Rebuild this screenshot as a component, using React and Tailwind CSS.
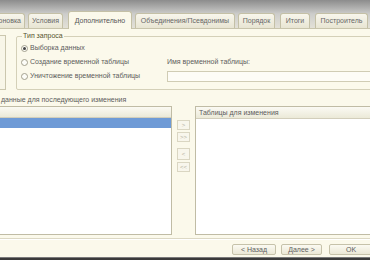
import React from 'react';

const tabs = [
  { label: 'Компоновка', cls: 'w-[31px] -ml-[6px]', align: 'justify-end pr-[3px]' },
  { label: 'Условия', cls: 'w-[35px] ml-[3px]' },
  { label: 'Дополнительно', cls: 'w-[64px] ml-[5px]', active: true },
  { label: 'Объединения/Псевдонимы', cls: 'w-[100px] ml-[3px]' },
  { label: 'Порядок', cls: 'w-[37px] ml-[3px]' },
  { label: 'Итоги', cls: 'w-[30px] ml-[5px]' },
  { label: 'Построитель', cls: 'w-[53px] ml-[5px]' },
];

function Tab({ label, cls, active, align }) {
  if (active) {
    return (
      <div className={`${cls} h-[18px] -mb-px shrink-0 flex items-center justify-center rounded-t-[3px] border border-b-0 border-[#c4c0a6] bg-[#fbf9eb] text-[#555] relative`}>
        {label}
      </div>
    );
  }
  return (
    <div className={`${cls} h-[15px] shrink-0 flex items-center ${align || 'justify-center'} overflow-hidden whitespace-nowrap rounded-t-[3px] border border-b-0 border-[#c4c0a6] bg-gradient-to-b from-[#f8f6ec] to-[#e8e5d3] text-[#666]`}>
      {label}
    </div>
  );
}

function Radio({ checked, label }) {
  return (
    <div className="h-[10px] flex items-center gap-[2px]">
      <div className="w-[7px] h-[7px] rounded-full border border-[#a3a08e] bg-[#fdfdf8] flex items-center justify-center">
        {checked && <div className="w-[3px] h-[3px] rounded-full bg-[#444]"></div>}
      </div>
      <span>{label}</span>
    </div>
  );
}

function ArrowButton({ children, className = '' }) {
  return (
    <div className={`w-[13px] h-[10px] flex items-center justify-center border border-[#dad6c2] bg-[#f8f6ec] text-[#b6b3a1] text-[6px] leading-none ${className}`}>
      {children}
    </div>
  );
}

function Button({ children, className = '' }) {
  return (
    <div className={`h-[11px] flex items-center justify-center rounded-[2px] border border-[#c6c2aa] bg-gradient-to-b from-[#fbfaf2] to-[#ebe8d6] text-[#606060] ${className}`}>
      {children}
    </div>
  );
}

export default function App() {
  return (
    <div
      className="w-[370px] h-[260px] overflow-hidden flex flex-col bg-[#fbf9eb] text-[7px] leading-[8px] text-[#5c5c5c]"
      style={{ fontFamily: '"Liberation Sans", Arial, sans-serif' }}
    >
      {/* Tab strip */}
      <div className="h-[29px] shrink-0 flex items-end border-b border-[#c8c4ac] bg-gradient-to-b from-[#8c8c8c] via-[#cdcdcb] to-[#e3e1d7]">
        {tabs.map((t) => (
          <Tab key={t.label} {...t} />
        ))}
      </div>

      {/* Content */}
      <div className="flex-1 flex flex-col">
        <div className="mt-[3px] h-[58px] flex">
          <div className="w-[6px] mt-[3px] h-[55px] border-t border-r border-b border-[#cbc7ae] bg-[#f8f6e8] shrink-0"></div>
          <fieldset className="ml-[10px] flex-1 -mr-[6px] h-[58px] border border-[#d4d0b8] rounded-[2px]">
            <legend className="ml-[5px] px-[1px] text-[#55532f] leading-[8px]">Тип запроса</legend>
            <div className="flex">
              <div className="w-[150px] shrink-0 pl-[4px] pt-[3px] flex flex-col gap-[4px]">
                <Radio checked label="Выборка данных" />
                <Radio label="Создание временной таблицы" />
                <Radio label="Уничтожение временной таблицы" />
              </div>
              <div className="flex-1 flex flex-col">
                <div className="mt-[18px] h-[8px]">Имя временной таблицы:</div>
                <div className="mt-[5px] h-[11px] border border-[#d0ccb4] bg-[#fdfcf6]"></div>
              </div>
            </div>
          </fieldset>
        </div>

        <div className="mt-[6px] h-[8px] pl-[1px] whitespace-nowrap">данные для последующего изменения</div>

        <div className="mt-[2px] h-[129px] flex">
          <div className="w-[173px] -ml-px shrink-0 flex flex-col border border-[#c0bca5] bg-white">
            <div className="h-[11px] border-b border-[#d2cebb] bg-gradient-to-b from-[#fbfaf3] to-[#ebe9d8]"></div>
            <div className="h-[10px] bg-[#6e9ad6]"></div>
          </div>
          <div className="w-[23px] shrink-0 flex flex-col items-center pt-[14px]">
            <ArrowButton>&gt;</ArrowButton>
            <ArrowButton className="mt-[2px]">&gt;&gt;</ArrowButton>
            <ArrowButton className="mt-[6px] h-[12px]">&lt;</ArrowButton>
            <ArrowButton className="mt-[2px]">&lt;&lt;</ArrowButton>
          </div>
          <div className="flex-1 -mr-px flex flex-col border border-[#c0bca5] bg-white">
            <div className="h-[12px] flex items-center pl-[3px] border-b border-[#d2cebb] bg-gradient-to-b from-[#fbfaf3] to-[#ebe9d8]">
              Таблицы для изменения
            </div>
          </div>
        </div>

        <div className="mt-[3px] h-[2px] border-t border-[#dcd8c4] border-b border-b-white"></div>

        <div className="mt-[4px] flex justify-end">
          <Button className="w-[44px]">&lt; Назад</Button>
          <Button className="w-[41px] ml-[5px]">Далее &gt;</Button>
          <Button className="w-[44px] ml-[7px] -mr-[3px]">OK</Button>
        </div>
        <div className="flex-1"></div>
      </div>

      <div className="h-[3px] shrink-0 bg-[#3a3a3a] border-t border-[#7a7a7a]"></div>
    </div>
  );
}
